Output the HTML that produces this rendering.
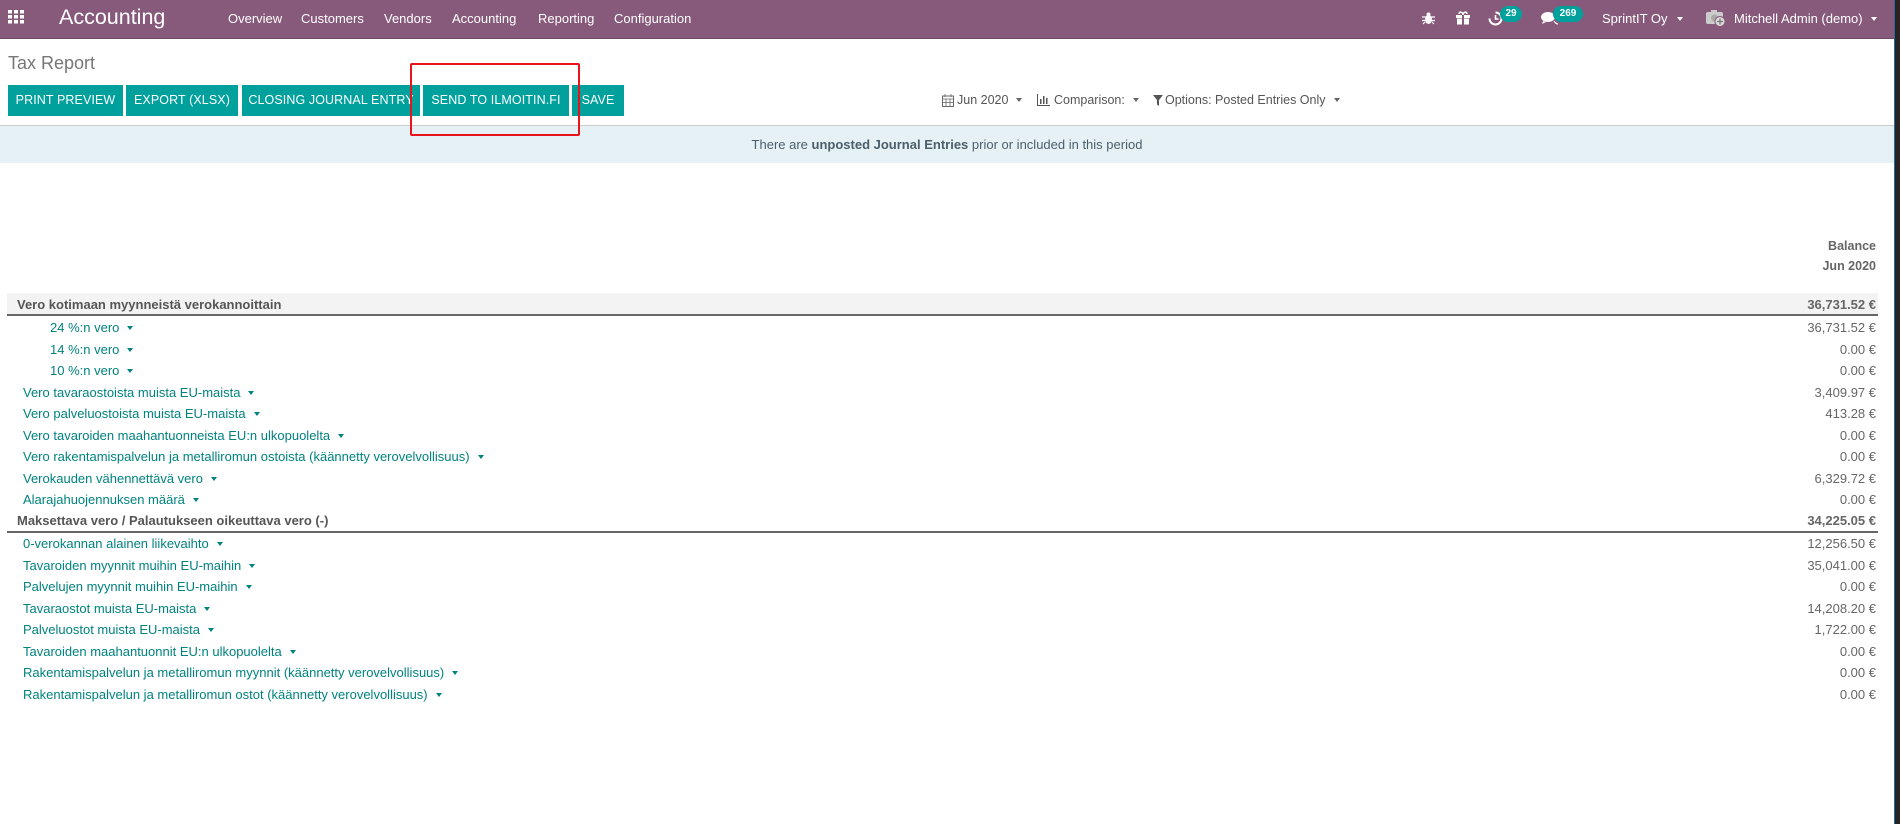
<!DOCTYPE html>
<html><head><meta charset="utf-8">
<style>
*{margin:0;padding:0;box-sizing:border-box}
body{width:1900px;height:824px;overflow:hidden;background:#fff;font-family:"Liberation Sans",sans-serif;position:relative;color:#666}
.a{position:absolute;white-space:nowrap}
.nav{position:absolute;left:0;top:0;width:1895px;height:39px;background:#875a7b;border-bottom:1px solid #6d4862}
.nav .m{position:absolute;top:11px;color:#fff;font-size:13px}
.btn{position:absolute;top:85px;height:31px;background:#00a09d;color:#fff;font-size:12.5px;line-height:31px;text-align:center;letter-spacing:0.1px}
.row{position:absolute;left:0;width:1894px;height:21px;font-size:13px;line-height:21px}
.row .l{position:absolute;color:#00827f}
.row .r{position:absolute;right:18px;color:#666}
.car{display:inline-block;width:0;height:0;border-left:3.5px solid transparent;border-right:3.5px solid transparent;border-top:4px solid #00827f;vertical-align:middle;margin-left:8px;margin-top:-2px}
.wc{border-top-color:#fff}
.gc{border-top-color:#666}
.badge{position:absolute;top:6px;height:16px;background:#00a09d;color:#fff;font-size:10px;line-height:16px;border-radius:8px;text-align:center;font-weight:bold}
</style></head><body>
<div class="nav">
  <svg class="a" style="left:8px;top:10px" width="17" height="14" viewBox="0 0 17 14" fill="#fff">
    <rect x="0" y="0" width="4" height="3.5"/><rect x="6" y="0" width="4" height="3.5"/><rect x="12" y="0" width="4" height="3.5"/>
    <rect x="0" y="5" width="4" height="3.5"/><rect x="6" y="5" width="4" height="3.5"/><rect x="12" y="5" width="4" height="3.5"/>
    <rect x="0" y="10" width="4" height="3.5"/><rect x="6" y="10" width="4" height="3.5"/><rect x="12" y="10" width="4" height="3.5"/>
  </svg>
  <div class="a" style="left:59px;top:5px;color:#fff;font-size:21.5px">Accounting</div>
  <div class="m" style="left:228px">Overview</div>
  <div class="m" style="left:301px">Customers</div>
  <div class="m" style="left:384px">Vendors</div>
  <div class="m" style="left:452px">Accounting</div>
  <div class="m" style="left:538px">Reporting</div>
  <div class="m" style="left:614px">Configuration</div>
  <svg class="a" style="left:1422px;top:12px" width="13" height="13" viewBox="0 0 13 13" fill="#fff"><ellipse cx="6.5" cy="7.5" rx="3.5" ry="4.5"/><circle cx="6.5" cy="2.5" r="2"/><path d="M0 5h13M0 8.5h13M1 12l2-2M12 12l-2-2" stroke="#fff" stroke-width="1.2"/></svg>
  <svg class="a" style="left:1456px;top:11px" width="14" height="14" viewBox="0 0 14 14" fill="#fff"><rect x="0" y="4" width="14" height="3"/><rect x="1" y="7.5" width="12" height="6"/><path d="M3 3c0-3 4-2 4 1c0-3 4-4 4-1" stroke="#fff" stroke-width="1.5" fill="none"/><rect x="6" y="4" width="2" height="10" fill="#875a7b"/></svg>
  <svg class="a" style="left:1488px;top:11px" width="15" height="15" viewBox="0 0 15 15"><path d="M7.5 1.5a6 6 0 1 1 -6 6" stroke="#fff" stroke-width="2" fill="none"/><path d="M7.5 4v4h3" stroke="#fff" stroke-width="1.6" fill="none"/></svg>
  <div class="badge" style="left:1500px;width:22px">29</div>
  <svg class="a" style="left:1541px;top:11px" width="17" height="15" viewBox="0 0 17 15" fill="#fff"><ellipse cx="7" cy="6" rx="7" ry="5"/><path d="M2 10l-1 3 4-2z"/><path d="M13 10c1 2 2 3 4 3-2-.5-3-1-4-3z" stroke="#fff"/></svg>
  <div class="badge" style="left:1553px;width:30px">269</div>
  <div class="m" style="left:1602px">SprintIT Oy<span class="car wc" style="margin-left:9px"></span></div>
  <svg class="a" style="left:1706px;top:9px" width="20" height="18" viewBox="0 0 20 18"><rect x="0" y="3" width="17" height="12" rx="2" fill="#ccc"/><rect x="5" y="1" width="6" height="3" fill="#ccc"/><circle cx="8.5" cy="9" r="3.5" fill="#aaa"/><circle cx="14" cy="12.5" r="5" fill="#ddd" stroke="#875a7b" stroke-width="1"/><path d="M14 9.5v6M11 12.5h6" stroke="#777" stroke-width="1.3"/></svg>
  <div class="m" style="left:1734px">Mitchell Admin (demo)<span class="car wc" style="margin-left:8px"></span></div>
</div>
<div class="a" style="left:1894px;top:0;width:6px;height:824px;background:#2a2220;border-left:1px solid #1d6f9e"></div>

<div class="a" style="left:8px;top:53px;font-size:18px;color:#777">Tax Report</div>
<div class="btn" style="left:8px;width:115px">PRINT PREVIEW</div>
<div class="btn" style="left:126px;width:112px">EXPORT (XLSX)</div>
<div class="btn" style="left:242px;width:178px">CLOSING JOURNAL ENTRY</div>
<div class="btn" style="left:423px;width:146px">SEND TO ILMOITIN.FI</div>
<div class="btn" style="left:572px;width:52px">SAVE</div>

<svg class="a" style="left:942px;top:94px" width="12" height="13" viewBox="0 0 12 13"><rect x="0.5" y="2" width="11" height="10.5" fill="none" stroke="#666"/><path d="M0.5 5h11M3 0v3M9 0v3M4 5v7M8 5v7M0.5 8.5h11" stroke="#666" stroke-width="0.8"/></svg>
<div class="a" style="left:957px;top:93px;font-size:12.5px;color:#555">Jun 2020<span class="car gc"></span></div>
<svg class="a" style="left:1037px;top:94px" width="13" height="12" viewBox="0 0 13 12"><path d="M0.5 0v11.5h12.5" stroke="#555" fill="none"/><rect x="3" y="5" width="1.5" height="5" fill="#555"/><rect x="6" y="2" width="1.5" height="8" fill="#555"/><rect x="9" y="4" width="1.5" height="6" fill="#555"/></svg>
<div class="a" style="left:1054px;top:93px;font-size:12.5px;color:#555">Comparison:<span class="car gc"></span></div>
<svg class="a" style="left:1153px;top:95px" width="10" height="11" viewBox="0 0 10 11"><path d="M0 0h10L6 5v6L4 9.5V5z" fill="#555"/></svg>
<div class="a" style="left:1165px;top:93px;font-size:12.5px;color:#555">Options: Posted Entries Only<span class="car gc"></span></div>

<div class="a" style="left:0;top:125px;width:1894px;height:38px;background:#e6f1f6;border-top:1px solid #ccc"></div>
<div class="a" style="left:0;top:137px;width:1894px;text-align:center;font-size:13px;color:#4b5e6a">There are <b>unposted Journal Entries</b> prior or included in this period</div>
<div class="a" style="left:410px;top:63px;width:170px;height:73px;border:2.5px solid #e8141b;border-radius:2px"></div>

<div class="a" style="right:24px;top:236px;font-size:12.5px;font-weight:bold;color:#666;text-align:right;line-height:20px">Balance<br>Jun 2020</div>

<div class="a" style="left:7px;top:293px;width:1871px;height:23px;background:#f3f3f3;border-bottom:2px solid #666"></div>
<div class="a" style="left:7px;top:531px;width:1871px;height:2px;background:#666"></div>

<div class="row" style="top:294px"><span class="l" style="left:17px;color:#555;font-weight:bold">Vero kotimaan myynneistä verokannoittain</span><span class="r" style="font-weight:bold">36,731.52 €</span></div>
<div class="row" style="top:317px"><span class="l" style="left:50px">24 %:n vero<span class="car"></span></span><span class="r">36,731.52 €</span></div>
<div class="row" style="top:339px"><span class="l" style="left:50px">14 %:n vero<span class="car"></span></span><span class="r">0.00 €</span></div>
<div class="row" style="top:360px"><span class="l" style="left:50px">10 %:n vero<span class="car"></span></span><span class="r">0.00 €</span></div>
<div class="row" style="top:382px"><span class="l" style="left:23px">Vero tavaraostoista muista EU-maista<span class="car"></span></span><span class="r">3,409.97 €</span></div>
<div class="row" style="top:403px"><span class="l" style="left:23px">Vero palveluostoista muista EU-maista<span class="car"></span></span><span class="r">413.28 €</span></div>
<div class="row" style="top:425px"><span class="l" style="left:23px">Vero tavaroiden maahantuonneista EU:n ulkopuolelta<span class="car"></span></span><span class="r">0.00 €</span></div>
<div class="row" style="top:446px"><span class="l" style="left:23px">Vero rakentamispalvelun ja metalliromun ostoista (käännetty verovelvollisuus)<span class="car"></span></span><span class="r">0.00 €</span></div>
<div class="row" style="top:468px"><span class="l" style="left:23px">Verokauden vähennettävä vero<span class="car"></span></span><span class="r">6,329.72 €</span></div>
<div class="row" style="top:489px"><span class="l" style="left:23px">Alarajahuojennuksen määrä<span class="car"></span></span><span class="r">0.00 €</span></div>
<div class="row" style="top:510px"><span class="l" style="left:17px;color:#555;font-weight:bold">Maksettava vero / Palautukseen oikeuttava vero (-)</span><span class="r" style="font-weight:bold">34,225.05 €</span></div>
<div class="row" style="top:533px"><span class="l" style="left:23px">0-verokannan alainen liikevaihto<span class="car"></span></span><span class="r">12,256.50 €</span></div>
<div class="row" style="top:555px"><span class="l" style="left:23px">Tavaroiden myynnit muihin EU-maihin<span class="car"></span></span><span class="r">35,041.00 €</span></div>
<div class="row" style="top:576px"><span class="l" style="left:23px">Palvelujen myynnit muihin EU-maihin<span class="car"></span></span><span class="r">0.00 €</span></div>
<div class="row" style="top:598px"><span class="l" style="left:23px">Tavaraostot muista EU-maista<span class="car"></span></span><span class="r">14,208.20 €</span></div>
<div class="row" style="top:619px"><span class="l" style="left:23px">Palveluostot muista EU-maista<span class="car"></span></span><span class="r">1,722.00 €</span></div>
<div class="row" style="top:641px"><span class="l" style="left:23px">Tavaroiden maahantuonnit EU:n ulkopuolelta<span class="car"></span></span><span class="r">0.00 €</span></div>
<div class="row" style="top:662px"><span class="l" style="left:23px">Rakentamispalvelun ja metalliromun myynnit (käännetty verovelvollisuus)<span class="car"></span></span><span class="r">0.00 €</span></div>
<div class="row" style="top:684px"><span class="l" style="left:23px">Rakentamispalvelun ja metalliromun ostot (käännetty verovelvollisuus)<span class="car"></span></span><span class="r">0.00 €</span></div>
</body></html>
